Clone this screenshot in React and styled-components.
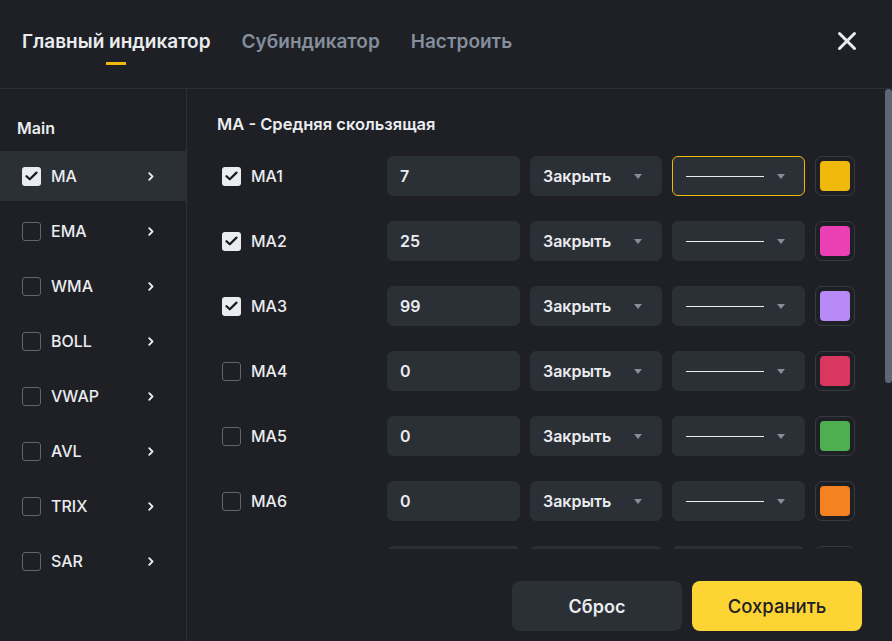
import React, { useState } from 'react';
import styled, { createGlobalStyle } from 'styled-components';

const GlobalStyle = createGlobalStyle`
  html, body {
    margin: 0;
    padding: 0;
    background: #1e2026;
  }
  body {
    font-family: Inter, "Noto Sans", "Liberation Sans", sans-serif;
    color: #eaecef;
  }
  * {
    box-sizing: border-box;
  }
`;

const Modal = styled.div`
  width: 892px;
  height: 641px;
  display: flex;
  flex-direction: column;
  background: #1e2026;
  overflow: hidden;
`;

const Header = styled.div`
  height: 89px;
  flex: none;
  display: flex;
  align-items: center;
  gap: 31px;
  padding: 0 33px 0 22px;
  border-bottom: 1px solid #2b2f36;
`;

const Tab = styled.div`
  position: relative;
  font-size: 19px;
  font-weight: 600;
  line-height: 24px;
  margin-top: -5px;
  color: ${p => (p.$active ? '#eaecef' : '#848e9c')};
  cursor: pointer;

  &::after {
    content: '';
    display: ${p => (p.$active ? 'block' : 'none')};
    position: absolute;
    left: 50%;
    bottom: -11px;
    width: 20px;
    height: 3px;
    margin-left: -10px;
    background: #f0b90b;
  }
`;

const CloseButton = styled.button`
  margin-left: auto;
  margin-top: -6px;
  width: 24px;
  height: 24px;
  padding: 0;
  border: 0;
  background: none;
  display: flex;
  align-items: center;
  justify-content: center;
  cursor: pointer;
`;

const Body = styled.div`
  flex: 1;
  min-height: 0;
  display: flex;
`;

const Sidebar = styled.div`
  width: 187px;
  flex: none;
  border-right: 1px solid #2b2f36;
  padding-top: 28px;
`;

const SideTitle = styled.div`
  font-size: 16px;
  font-weight: 600;
  line-height: 22px;
  padding-left: 17px;
  margin-bottom: 12px;
`;

const SideItem = styled.div`
  height: 50px;
  margin-bottom: 5px;
  display: flex;
  align-items: center;
  gap: 10px;
  padding: 0 32px 0 22px;
  background: ${p => (p.$active ? '#2b2f36' : 'transparent')};
  cursor: pointer;
`;

const ItemLabel = styled.span`
  flex: 1;
  font-size: 16px;
  font-weight: 500;
  color: #eaecef;
`;

const Box = styled.span`
  width: 19px;
  height: 19px;
  flex: none;
  border-radius: 3px;
  display: flex;
  align-items: center;
  justify-content: center;
  background: ${p => (p.$checked ? '#eaecef' : 'transparent')};
  border: ${p => (p.$checked ? 'none' : '1px solid #5e6673')};
`;

const Main = styled.div`
  position: relative;
  flex: 1;
  min-width: 0;
  display: flex;
  flex-direction: column;
`;

const Scroll = styled.div`
  flex: 1;
  min-height: 0;
  overflow: hidden;
  padding: 24px 0 28px 30px;
`;

const ScrollThumb = styled.div`
  position: absolute;
  top: 0;
  right: 0;
  width: 7px;
  border-radius: 4px;
  background: #5e6673;
`;

const SectionTitle = styled.div`
  font-size: 16.5px;
  font-weight: 600;
  line-height: 22px;
  margin-bottom: 21px;
`;

const Rows = styled.div`
  display: flex;
  flex-direction: column;
  gap: 25px;
`;

const Row = styled.div`
  display: grid;
  grid-template-columns: 160px 133px 132px 133px 40px;
  gap: 10px;
  height: 40px;
  align-items: center;
`;

const RowLabel = styled.label`
  display: flex;
  align-items: center;
  gap: 10px;
  padding-left: 5px;
  font-size: 16px;
  font-weight: 500;
  cursor: pointer;
`;

const Field = styled.div`
  height: 40px;
  border-radius: 6px;
  background: #2b2f36;
  border: 1px solid ${p => (p.$focused ? '#f0b90b' : '#2b2f36')};
  display: flex;
  align-items: center;
  padding: 0 19px 0 12px;
  font-size: 16px;
  font-weight: 600;
  color: #eaecef;
`;

const FieldText = styled.span`
  flex: 1;
`;

const LineSample = styled.span`
  display: block;
  width: 78px;
  height: 1px;
  margin-left: 1px;
  margin-right: auto;
  background: #eaecef;
`;

const Caret = styled.span`
  width: 0;
  height: 0;
  border-left: 4px solid transparent;
  border-right: 4px solid transparent;
  border-top: 5px solid #848e9c;
`;

const Swatch = styled.div`
  width: 40px;
  height: 40px;
  border-radius: 7px;
  border: 1px solid #363a42;
  padding: 4px;
`;

const SwatchFill = styled.div`
  width: 100%;
  height: 100%;
  border-radius: 4px;
  background: ${p => p.$color};
`;

const Footer = styled.div`
  height: 92px;
  flex: none;
  display: flex;
  justify-content: flex-end;
  gap: 10px;
  padding: 32px 30px 10px 0;
`;

const Button = styled.button`
  width: 170px;
  height: 50px;
  border: 0;
  border-radius: 8px;
  font-family: inherit;
  font-size: ${p => (p.$primary ? '18.5px' : '18px')};
  font-weight: ${p => (p.$primary ? 500 : 600)};
  background: ${p => (p.$primary ? '#fcd535' : '#2b2f36')};
  color: ${p => (p.$primary ? '#1e2026' : '#eaecef')};
  cursor: pointer;
`;

const Check = () => (
  <svg width="13" height="10" viewBox="0 0 13 10">
    <path d="M1.5 5.2 L4.8 8.3 L11.5 1.6" fill="none" stroke="#181a20" strokeWidth="2.2" strokeLinecap="round" strokeLinejoin="round" />
  </svg>
);

const Checkbox = ({ checked }) => <Box $checked={checked}>{checked && <Check />}</Box>;

const Chevron = () => (
  <svg width="6" height="9" viewBox="0 0 6 9">
    <path d="M1.2 1.2 L4.5 4.5 L1.2 7.8" fill="none" stroke="#eaecef" strokeWidth="1.8" strokeLinecap="round" strokeLinejoin="round" />
  </svg>
);

const CloseIcon = () => (
  <svg width="20" height="20" viewBox="0 0 20 20">
    <path d="M2.5 2.5 L17.5 17.5 M17.5 2.5 L2.5 17.5" stroke="#eaecef" strokeWidth="3" strokeLinecap="round" />
  </svg>
);

const indicators = [
  { name: 'MA', checked: true },
  { name: 'EMA' },
  { name: 'WMA' },
  { name: 'BOLL' },
  { name: 'VWAP' },
  { name: 'AVL' },
  { name: 'TRIX' },
  { name: 'SAR' },
];

const lines = [
  { name: 'MA1', value: 7, color: '#f0b90b', checked: true },
  { name: 'MA2', value: 25, color: '#eb40b5', checked: true },
  { name: 'MA3', value: 99, color: '#b88af8', checked: true },
  { name: 'MA4', value: 0, color: '#d9375f' },
  { name: 'MA5', value: 0, color: '#4daf50' },
  { name: 'MA6', value: 0, color: '#f58220' },
  { name: 'MA7', value: 0, color: '#2f9ce8' },
  { name: 'MA8', value: 0, color: '#9c6ade' },
  { name: 'MA9', value: 0, color: '#26a69a' },
  { name: 'MA10', value: 0, color: '#e0e3eb' },
];

const tabs = ['Главный индикатор', 'Субиндикатор', 'Настроить'];

// visible area 460px, list content ~720px
const thumbHeight = Math.round((460 / 720) * 460);

export default function App() {
  const [tab, setTab] = useState(0);

  return (
    <>
      <GlobalStyle />
      <Modal>
        <Header>
          {tabs.map((t, i) => (
            <Tab key={t} $active={tab === i} onClick={() => setTab(i)}>
              {t}
            </Tab>
          ))}
          <CloseButton aria-label="close">
            <CloseIcon />
          </CloseButton>
        </Header>
        <Body>
          <Sidebar>
            <SideTitle>Main</SideTitle>
            {indicators.map(ind => (
              <SideItem key={ind.name} $active={ind.name === 'MA'}>
                <Checkbox checked={ind.checked} />
                <ItemLabel>{ind.name}</ItemLabel>
                <Chevron />
              </SideItem>
            ))}
          </Sidebar>
          <Main>
            <Scroll>
              <SectionTitle>MA - Средняя скользящая</SectionTitle>
              <Rows>
                {lines.map((l, i) => (
                  <Row key={l.name}>
                    <RowLabel>
                      <Checkbox checked={l.checked} />
                      {l.name}
                    </RowLabel>
                    <Field>
                      <FieldText>{l.value}</FieldText>
                    </Field>
                    <Field>
                      <FieldText>Закрыть</FieldText>
                      <Caret />
                    </Field>
                    <Field $focused={i === 0}>
                      <LineSample />
                      <Caret />
                    </Field>
                    <Swatch>
                      <SwatchFill $color={l.color} />
                    </Swatch>
                  </Row>
                ))}
              </Rows>
            </Scroll>
            <ScrollThumb style={{ height: thumbHeight }} />
            <Footer>
              <Button>Сброс</Button>
              <Button $primary>Сохранить</Button>
            </Footer>
          </Main>
        </Body>
      </Modal>
    </>
  );
}
